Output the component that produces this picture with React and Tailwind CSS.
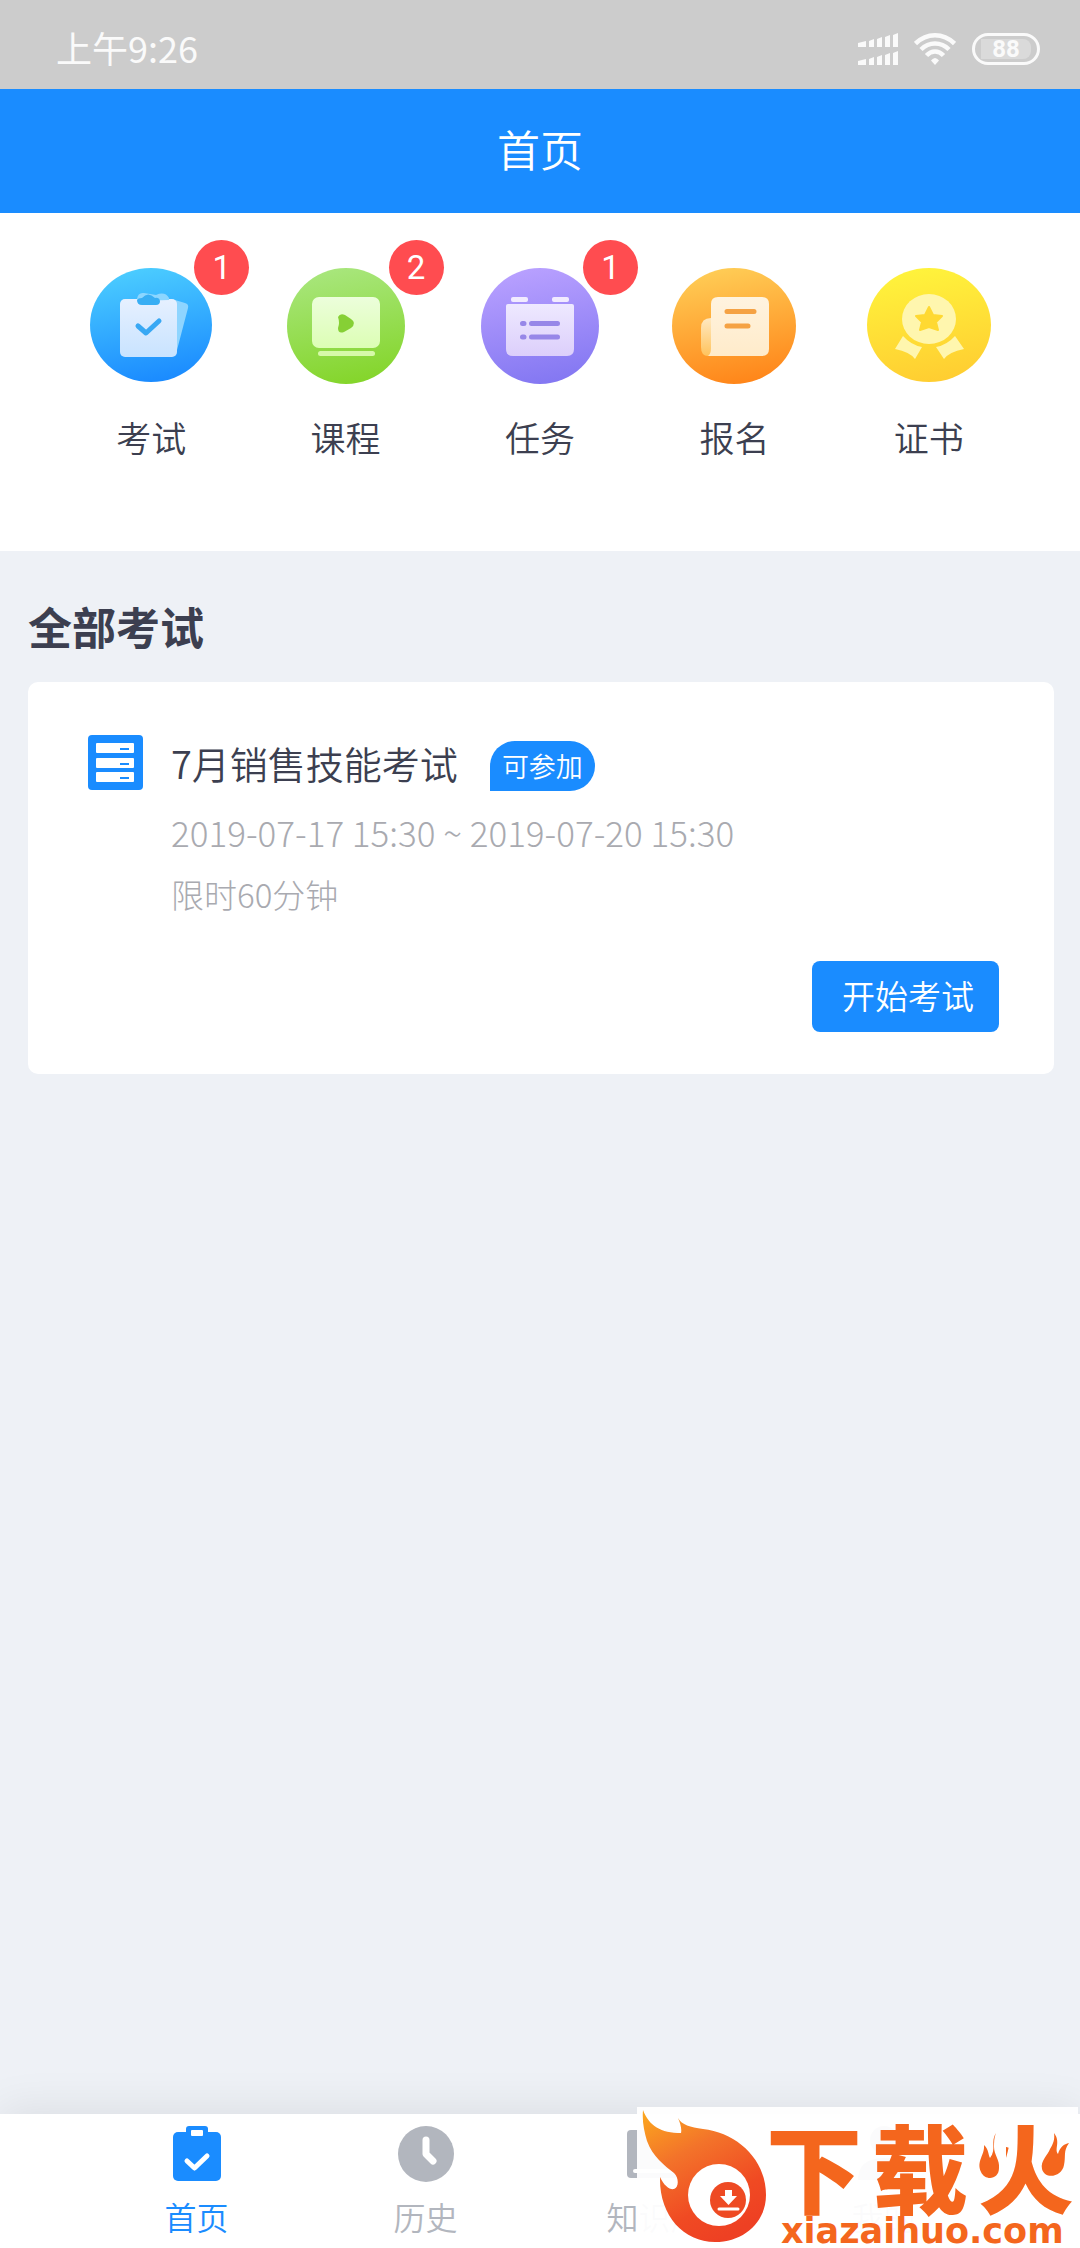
const BLUE = "#1a8cff";

function SignalIcon() {
  return (
    <svg className="h-8 w-10" viewBox="0 0 40 32" fill="#fafafa" aria-hidden="true">
      {[0, 18].map((y) => (
        <g key={y}>
          <path d={`M0 ${y + 10} L8 ${y + 8} V${y + 14} H0 Z`} />
          <path d={`M11 ${y + 8} L16 ${y + 6} V${y + 14} H11 Z`} />
          <path d={`M19 ${y + 6} L24 ${y + 4} V${y + 14} H19 Z`} />
          <path d={`M27 ${y + 4} L32 ${y + 2} V${y + 14} H27 Z`} />
          <path d={`M35 ${y + 2} L40 ${y} V${y + 14} H35 Z`} />
        </g>
      ))}
    </svg>
  );
}

function WifiIcon() {
  return (
    <svg className="h-8 w-[42px]" viewBox="0 0 42 32" fill="none" stroke="#fafafa" strokeWidth="4.5" aria-hidden="true">
      <path d="M1.5 10.5 C13 -0.5 29 -0.5 40.5 10.5" />
      <path d="M7 16.5 C15 8.5 27 8.5 35 16.5" />
      <path d="M12.5 22.5 C17.5 17 24.5 17 29.5 22.5" />
      <path d="M17 27.5 Q21 22.5 25 27.5 L21 32 Z" fill="#fafafa" stroke="none" />
    </svg>
  );
}

function Disc({ id, from, to, rx, cy = 58, children }) {
  return (
    <svg className="h-[116px] w-[124px]" viewBox="0 0 124 116" aria-hidden="true">
      <defs>
        <linearGradient id={id} x1="0.4" y1="0" x2="0.6" y2="1">
          <stop offset="0" stopColor={from} />
          <stop offset="1" stopColor={to} />
        </linearGradient>
      </defs>
      <ellipse cx="62" cy={cy} rx={rx} ry={cy} fill={`url(#${id})`} />
      {children}
    </svg>
  );
}

function Sheet({ id, from, to }) {
  return (
    <linearGradient id={id} x1="0" y1="0" x2="0" y2="1">
      <stop offset="0" stopColor={from} />
      <stop offset="1" stopColor={to} />
    </linearGradient>
  );
}

function ExamIcon() {
  return (
    <Disc id="exam" from="#4bccff" to="#1a8aff" rx="61" cy={57}>
      <Sheet id="exam-sheet" from="#e6f0ff" to="#c8e3ff" />
      <path d="M86 32 L96 35 Q100 36 99 40 L88 82 Z" fill="#8fd5ff" />
      <rect x="31" y="31" width="57" height="58" rx="5" fill="url(#exam-sheet)" />
      <path d="M48 31 Q49 24 55 25 L67 27 Q76 23 80 30 L80 32 L50 33 Z" fill="#8cd6ff" />
      <path d="M48 32 Q49 30 53 30 Q59 23 66 30 Q70 29 71 33 Q71 37 67 37 H53 Q48 37 48 32 Z" fill="#38aef4" />
      <path d="M49 58 L57 65 L70 53" fill="none" stroke="#38a8f4" strokeWidth="5" strokeLinecap="round" strokeLinejoin="round" />
    </Disc>
  );
}

function CourseIcon() {
  return (
    <Disc id="course" from="#a8e67c" to="#84d52a" rx="59">
      <Sheet id="course-sheet" from="#ecfedb" to="#dcfeb4" />
      <rect x="28" y="29" width="68" height="51" rx="7" fill="url(#course-sheet)" />
      <rect x="34" y="83" width="57" height="5" rx="2.5" fill="#d6f9a9" />
      <path d="M54 49 Q56 45 61 47 L67 51 Q73 55 67 60 L60 64 Q54 66 54 60 Q56 55 54 49 Z" fill="#86d035" />
    </Disc>
  );
}

function TaskIcon() {
  return (
    <Disc id="task" from="#b8a0ff" to="#8377f2" rx="59">
      <Sheet id="task-sheet" from="#eee9ff" to="#dccffb" />
      <rect x="33" y="29" width="17" height="5" rx="2" fill="#f1ebff" />
      <rect x="74" y="29" width="17" height="5" rx="2" fill="#f1ebff" />
      <path d="M30 36 H94 Q96 36 96 38 V81 Q96 88 89 88 H35 Q28 88 28 81 V38 Q28 36 30 36 Z" fill="url(#task-sheet)" />
      <g stroke="#9787e8" strokeWidth="5" strokeLinecap="round">
        <path d="M44.5 55.5 H46 M53.5 55.5 H79.5" />
        <path d="M44.5 69 H46 M53.5 69 H79.5" />
      </g>
    </Disc>
  );
}

function SignupIcon() {
  return (
    <Disc id="signup" from="#ffcc55" to="#ff8519" rx="62">
      <Sheet id="signup-sheet" from="#fff3df" to="#ffebca" />
      <Sheet id="signup-roll" from="#ffe9c2" to="#ffc35c" />
      <path d="M39 50 Q29 50 29 60 V79 Q29 88 36 88 H44 V50 Z" fill="url(#signup-roll)" />
      <path d="M46 29 H90 Q97 29 97 36 V81 Q97 88 90 88 H36 Q39 86 39 80 V36 Q39 29 46 29 Z" fill="url(#signup-sheet)" />
      <path d="M55 43.5 H82 M55 58 H76" stroke="#f5a244" strokeWidth="5" strokeLinecap="round" />
    </Disc>
  );
}

function CertIcon() {
  return (
    <Disc id="cert" from="#fff33c" to="#ffcd31" rx="62" cy={57}>
      <ellipse cx="62" cy="51" rx="27" ry="25" fill="#fff6ae" />
      <path d="M62 39 L66 47 L75 48 L69 54 L71 62 L62 59 L53 62 L55 54 L49 48 L58 47 Z" fill="#ffd932" stroke="#ffd932" strokeWidth="2" strokeLinejoin="round" />
      <path d="M36 68 Q44 77 55 79 L48 91 Q43 84 28 81 Z" fill="#fff6ae" />
      <path d="M88 68 Q80 77 69 79 L77 91 Q82 84 97 81 Z" fill="#fff6ae" />
    </Disc>
  );
}

function PaperIcon() {
  return (
    <svg className="h-[55px] w-[55px] shrink-0" viewBox="0 0 55 55" aria-hidden="true">
      <rect width="55" height="55" rx="4" fill={BLUE} />
      {[8, 23, 37].map((y) => (
        <g key={y}>
          <rect x="8" y={y} width="38" height="10" rx="1" fill="#fff" />
          <rect x="32" y={y + 5} width="9" height="2" fill={BLUE} />
        </g>
      ))}
    </svg>
  );
}

function HomeTabIcon() {
  return (
    <svg className="h-14 w-14" viewBox="0 0 56 56" aria-hidden="true">
      <rect x="4" y="6" width="48" height="49" rx="5" fill={BLUE} />
      <rect x="17" width="22" height="14" rx="3" fill={BLUE} />
      <rect x="22" y="4" width="12" height="6" rx="1" fill="#fff" />
      <path d="M18 35 L25.5 42 L38 30" fill="none" stroke="#fff" strokeWidth="5" strokeLinecap="round" strokeLinejoin="round" />
    </svg>
  );
}

function HistoryTabIcon() {
  return (
    <svg className="h-14 w-14" viewBox="0 0 56 56" aria-hidden="true">
      <circle cx="28" cy="28" r="28" fill="#b2b6be" />
      <path d="M28 14 V28 L35 35" fill="none" stroke="#fff" strokeWidth="7" strokeLinecap="round" strokeLinejoin="round" />
    </svg>
  );
}

function LibraryTabIcon() {
  return (
    <svg className="h-14 w-14" viewBox="0 0 56 56" fill="#b2b6be" aria-hidden="true">
      <path d="M4 4 H48 Q52 4 52 8 V48 Q52 52 48 52 H4 Q0 52 0 48 V8 Q0 4 4 4 Z" />
      <path d="M8 45 H48" stroke="#fff" strokeWidth="4" strokeLinecap="round" />
    </svg>
  );
}

function MineTabIcon() {
  return (
    <svg className="h-14 w-14" viewBox="0 0 56 56" fill="#b2b6be" aria-hidden="true">
      <circle cx="28" cy="14" r="14" />
      <path d="M2 54 Q2 32 28 32 Q54 32 54 54 Z" />
    </svg>
  );
}

function FlameLogo() {
  return (
    <svg className="absolute left-0 top-0 h-[141px] w-[441px]" viewBox="0 0 441 141" aria-hidden="true">
      <defs>
        <linearGradient id="flame" x1="0.1" y1="0" x2="0.6" y2="1">
          <stop offset="0" stopColor="#fba41f" />
          <stop offset="0.35" stopColor="#f3732a" />
          <stop offset="0.75" stopColor="#f04a23" />
          <stop offset="1" stopColor="#ee4023" />
        </linearGradient>
      </defs>
      <path
        d="M6 3 C12 19 24 26 44 26 C45 21 43 16 41 11 C45 18 53 20 66 22 C100 26 129 52 129 88 C129 115 107 135 78 135 C46 135 22 108 23 70 C27 79 33 83 37 82 C42 80 42 71 37 66 C27 58 16 50 10 34 C7 24 5 14 6 3 Z"
        fill="url(#flame)"
      />
      <circle cx="82" cy="88" r="31" fill="#fff" />
      <circle cx="91" cy="93" r="18" fill="#ee4a23" />
      <path d="M88 83 H95 V89 H100 L91.5 98 L83 89 H88 Z" fill="#fff" />
      <path d="M82 102 H101" stroke="#fff" strokeWidth="3" strokeLinecap="round" />
      <g fill="#fff">
        <path d="M336 34 H369 V66 L360 82 H336 Z" />
        <path d="M441 28 H402 V66 L412 80 H441 Z" />
      </g>
      <g fill="#f4661d">
        <path d="M359 26 C353 35 360 42 353 51 C351 47 352 43 347 38 C348 48 339 54 344 65 C348 74 362 73 362 61 C363 53 357 48 357 40 C357 35 357 31 359 26 Z" />
        <path d="M417 26 C424 35 417 42 421 47 C423 40 427 37 432 36 C426 44 429 50 427 58 C425 70 408 73 405 62 C403 54 411 48 413 42 C416 37 418 33 417 26 Z" />
      </g>
    </svg>
  );
}

const shortcuts = [
  { label: "考试", badge: 1, Icon: ExamIcon },
  { label: "课程", badge: 2, Icon: CourseIcon },
  { label: "任务", badge: 1, Icon: TaskIcon },
  { label: "报名", Icon: SignupIcon },
  { label: "证书", Icon: CertIcon },
];

const tabs = [
  { label: "首页", Icon: HomeTabIcon, active: true },
  { label: "历史", Icon: HistoryTabIcon },
  { label: "知识库", Icon: LibraryTabIcon },
  { label: "我的", Icon: MineTabIcon },
];

export default function App() {
  return (
    <div className="flex min-h-screen flex-col bg-[#eef1f6] font-['Noto_Sans_CJK_SC',sans-serif] font-[350] text-[#3c3f50]">
      <div className="flex h-[89px] items-center justify-between bg-[#cccccc] pl-14 pr-10 pt-2 text-[#fafafa]">
        <span className="pb-1 text-[36px] leading-10 font-normal">上午9:26</span>
        <div className="flex items-center gap-4">
          <SignalIcon />
          <WifiIcon />
          <div className="flex h-8 w-[68px] items-center justify-center rounded-full border-3 border-[#fafafa]">
            <span className="h-5 w-[50px] rounded-r-lg bg-[#dadada] text-center font-['Roboto',sans-serif] text-[24px] leading-5 font-bold">88</span>
          </div>
        </div>
      </div>

      <header className="flex h-[124px] items-center justify-center bg-[#1a8cff] pb-1.5 text-white">
        <h1 className="text-[43px] leading-[60px]">首页</h1>
      </header>

      <nav className="grid h-[338px] grid-cols-5 content-start bg-white px-[5%] pt-[55px]">
        {shortcuts.map(({ label, badge, Icon }) => (
          <button key={label} type="button" className="flex flex-col items-center gap-[27px]">
            <span className="relative">
              <Icon />
              {badge && (
                <span className="absolute -top-7 -right-9 flex h-[55px] w-[55px] items-center justify-center rounded-full bg-[#ff4c50] font-['Roboto',sans-serif] text-[33px] leading-none font-normal text-white">
                  {badge}
                </span>
              )}
            </span>
            <span className="text-[35px] leading-[52px]">{label}</span>
          </button>
        ))}
      </nav>

      <main className="flex-1 pt-[43px] pr-[26px] pl-7">
        <h2 className="text-[44px] leading-[64px] font-bold">全部考试</h2>
        <article className="mt-6 flex gap-7 rounded-[10px] bg-white pt-[53px] pr-[55px] pb-[42px] pl-[60px]">
          <PaperIcon />
          <div className="flex flex-1 flex-col">
            <div className="flex items-center gap-8">
              <h3 className="text-[38px] leading-[54px]">7月销售技能考试</h3>
              <span className="mt-1.5 flex h-[50px] items-center rounded-full rounded-bl-none bg-[#1a8cff] px-3 pb-0.5 text-[27px] leading-none text-white">可参加</span>
            </div>
            <p className="mt-4 text-[35px] leading-[50px] font-light text-[#a9aab0]">2019-07-17 15:30 ~ 2019-07-20 15:30</p>
            <p className="mt-3 text-[33px] leading-[50px] font-light text-[#a9aab0]">限时60分钟</p>
            <button type="button" className="mt-[42px] h-[71px] self-end rounded-lg bg-[#1a8cff] pr-[25px] pb-0.5 pl-[30px] text-[33px] leading-none text-white">开始考试</button>
          </div>
        </article>
      </main>

      <footer className="relative h-[134px] bg-white shadow-[0_-6px_40px_rgba(0,0,0,0.08)]">
        <nav className="grid grid-cols-4 px-[82px] pt-3">
          {tabs.map(({ label, Icon, active }) => (
            <a key={label} href="#" className={active ? "flex flex-col items-center gap-[10px] text-[#1a8cff]" : "flex flex-col items-center gap-[10px] text-[#b2b6be]"}>
              <Icon />
              <span className="text-[32px] leading-[48px]">{label}</span>
            </a>
          ))}
        </nav>
        <div className="absolute right-0.5 bottom-0 h-[141px] w-[441px] bg-white/95 text-[#f4661d]">
          <div className="absolute top-[16px] left-[129px] flex w-[308px] justify-between text-[96px] leading-[84px] font-black">
            <span>下</span>
            <span>载</span>
            <span>火</span>
          </div>
          <FlameLogo />
          <div className="absolute top-[106px] left-[144px] font-['DejaVu_Sans',sans-serif] text-[35px] leading-9 font-bold">xiazaihuo.com</div>
        </div>
      </footer>
    </div>
  );
}
